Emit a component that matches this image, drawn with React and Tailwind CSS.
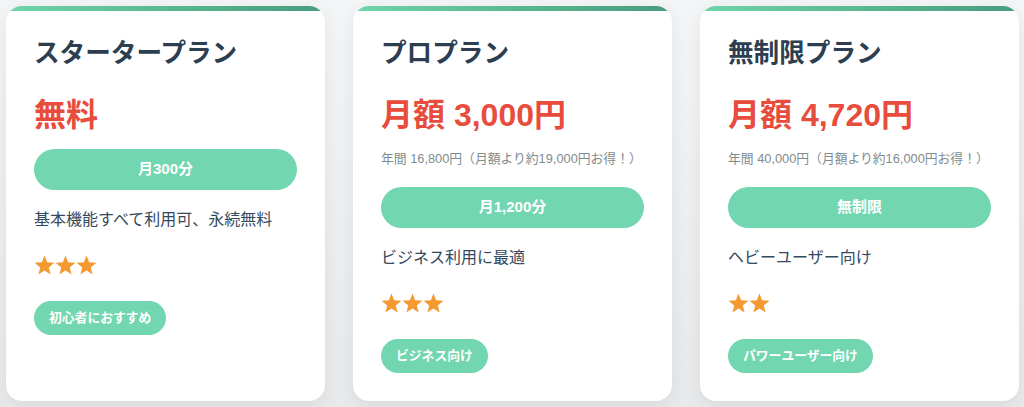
import React from "react";

const plans = [
  {
    name: "スタータープラン",
    price: "無料",
    minutes: "月300分",
    desc: "基本機能すべて利用可、永続無料",
    stars: 3,
    badge: "初心者におすすめ",
  },
  {
    name: "プロプラン",
    price: "月額 3,000円",
    annual: "年間 16,800円（月額より約19,000円お得！）",
    minutes: "月1,200分",
    desc: "ビジネス利用に最適",
    stars: 3,
    badge: "ビジネス向け",
  },
  {
    name: "無制限プラン",
    price: "月額 4,720円",
    annual: "年間 40,000円（月額より約16,000円お得！）",
    minutes: "無制限",
    desc: "ヘビーユーザー向け",
    stars: 2,
    badge: "パワーユーザー向け",
  },
];

const Star = () => (
  <svg width="21" height="21" viewBox="0 0 21 21" className="fill-[#f49a32]">
    <polygon points="10.5,0.5 13.15,7.36 20.49,7.76 14.78,12.39 16.67,19.49 10.5,15.5 4.33,19.49 6.22,12.39 0.51,7.76 7.85,7.36" />
  </svg>
);

const PlanCard = ({ plan }) => {
  return (
    <div className="relative w-[319px] shrink-0 overflow-hidden rounded-[16px] bg-white px-[28px] pt-[32px] pb-[28px] shadow-[0_4px_18px_rgba(0,0,0,0.07)]">
      {/* top accent bar */}
      <div className="absolute inset-x-0 top-0 h-[5px] bg-gradient-to-r from-[#70d4aa] to-[#469c7b]" />

      <h2 className="mb-[27px] text-[25.6px] font-bold leading-[1.2] text-[#2c3e50]">
        {plan.name}
      </h2>
      <p className="mb-[14.6px] text-[32px] font-bold leading-[1.2] text-[#e74c3c]">
        {plan.price}
      </p>
      {plan.annual && (
        <p className="mb-[19px] text-[12.8px] leading-[1.5] text-[#7f8c8d]">
          {plan.annual}
        </p>
      )}
      <div className="mb-[18px] flex h-[41px] items-center justify-center rounded-full bg-[#72d6b0] text-[15px] font-bold text-white">
        {plan.minutes}
      </div>
      <p className="mb-[23.5px] text-[16px] leading-[1.5] text-[#34495e]">
        {plan.desc}
      </p>
      <div className="mb-[24.5px] flex h-[21px]">
        {Array.from({ length: plan.stars }).map((_, i) => (
          <Star key={i} />
        ))}
      </div>
      <span className="inline-flex h-[34px] items-center rounded-full bg-[#72d6b0] px-[15px] text-[12.8px] font-bold text-white">
        {plan.badge}
      </span>
    </div>
  );
};

export default function App() {
  return (
    <div
      className="min-h-[407px] w-full bg-gradient-to-b from-[#f4f5f6] to-[#e8e9eb] pl-[6px] pt-[6px]"
      style={{ fontFamily: '"Liberation Sans", "Noto Sans CJK JP", sans-serif' }}
    >
      <div className="flex items-stretch gap-[28px]">
        {plans.map((p) => (
          <PlanCard key={p.name} plan={p} />
        ))}
      </div>
    </div>
  );
}
